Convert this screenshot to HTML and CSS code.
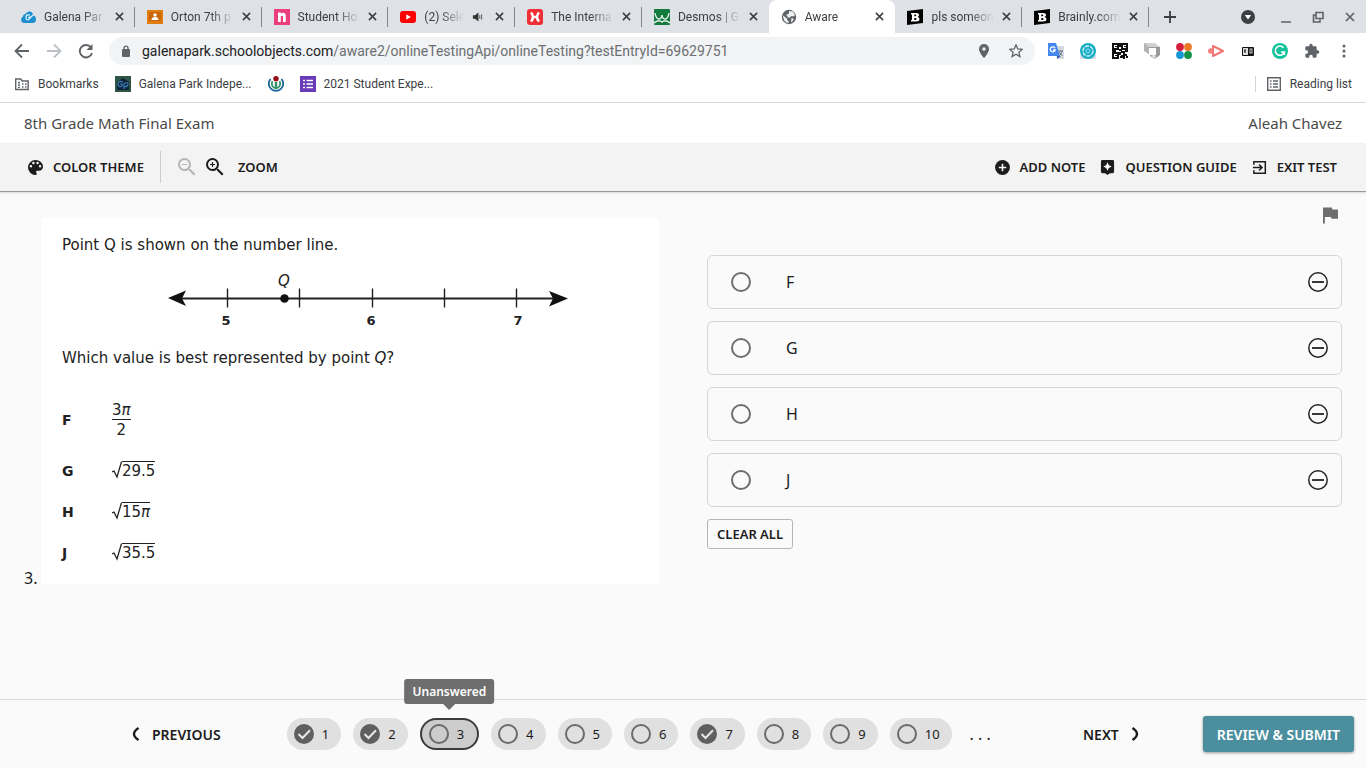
FILE: index.html
```html
<!DOCTYPE html>
<html lang="en">
<head>
<meta charset="utf-8">
<meta name="viewport" content="width=device-width, initial-scale=1">
<title>Aware</title>
<link rel="stylesheet" href="styles.css">
</head>
<body>
<svg class="defs" aria-hidden="true">
  <symbol id="x" viewBox="0 0 10 10"><path d="M1 1l8 8M9 1L1 9" stroke="currentColor" stroke-width="1.700"/></symbol>
  <symbol id="brainly" viewBox="0 0 16 16"><path d="M0 2L16 0V14L0 16Z" fill="#000"/><path d="M4 4h5q3 0 3 2 0 1.500-1.500 2 2 .3 2 2 0 2.500-3.500 2.500H4v-1.500h1v-5.500H4zM7.300 5.600v1.700h1q1 0 1-.8t-1-.9zM7.300 8.900V11h1.200q1 0 1-1t-1-1.100z" fill="#fff" fill-rule="evenodd"/></symbol>
  <symbol id="check" viewBox="0 0 20 20"><circle cx="10" cy="10" r="10" fill="#5f5f5f"/><path d="M4.500 10l4 4 7.500-7.800" fill="none" stroke="#e8e8e8" stroke-width="2"/></symbol>
  <symbol id="ring" viewBox="0 0 20 20"><circle cx="10" cy="10" r="9" fill="none" stroke="#6a6a6a" stroke-width="2"/></symbol>
  <symbol id="minus" viewBox="0 0 20 20"><circle cx="10" cy="10" r="9.200" fill="none" stroke="#222" stroke-width="1.500"/><path d="M4 10h12" stroke="#222" stroke-width="1.800"/></symbol>
  <symbol id="zoomout" viewBox="3 3 18 18"><path fill="currentColor" d="M15.500 14h-.79l-.28-.27A6.471 6.471 0 0 0 16 9.500 6.500 6.500 0 1 0 9.500 16c1.610 0 3.090-.59 4.230-1.570l.27.28v.79l5 4.990L20.490 19l-4.990-5zm-6 0C7.010 14 5 11.990 5 9.500S7.010 5 9.500 5 14 7.010 14 9.500 11.990 14 9.500 14zM7 9h5v1H7z"/></symbol>
</svg>

<header class="browser">
  <div class="strip">
    <div class="tabs">
      <div class="tab"><svg class="fav" viewBox="0 0 16 16"><path d="M3.500 14a3.500 3.500 0 0 1-.5-6.500Q3 5 5.500 5 7 2 10 2.500q3 .8 3.200 4Q16 7 16 10.500 16 14 12.500 14z" fill="#1c8fd0"/><path d="M10 6q-4-1-4 2.500 0 3 3 2 1-1 1-2.500l-2 .5M10 9l3-3" fill="none" stroke="#e4f4fc" stroke-width="1.200"/></svg><span class="name">Galena Par</span><button aria-label="Close tab"><svg><use href="#x"/></svg></button></div>
      <div class="tab"><svg class="fav" viewBox="0 0 16 16"><path d="M0 1h16v14H0z" fill="#e07c10"/><path d="M2 3h12v9H2z" fill="#c86608"/><circle cx="8" cy="6" r="1.700" fill="#fff"/><path d="M4.500 11q0-3 3.500-3t3.500 3z" fill="#fff"/></svg><span class="name">Orton 7th p</span><button aria-label="Close tab"><svg><use href="#x"/></svg></button></div>
      <div class="tab"><svg class="fav" viewBox="0 0 16 16"><path d="M0 0h16v16H0z" fill="#ea3f7b"/><path d="M4 3.500h2.800v1q4.700-2.500 5 2.500v6H9V7.500q-.3-1.500-2.200-.4V13H4z" fill="#fff"/></svg><span class="name">Student Ho</span><button aria-label="Close tab"><svg><use href="#x"/></svg></button></div>
      <div class="tab"><svg class="fav" viewBox="0 0 16 16"><rect y="2" width="16" height="12" rx="3" fill="#f00"/><path d="M6.300 5.300L10.800 8l-4.500 2.700z" fill="#fff"/></svg><span class="name">(2) Sele</span><svg class="sound" viewBox="0 0 12 12"><path d="M1 4h2.300L7 1v10L3.300 8H1z" fill="#333"/><path d="M8.500 4v4M10.500 3v6" stroke="#555" stroke-width="1"/></svg><button aria-label="Close tab"><svg><use href="#x"/></svg></button></div>
      <div class="tab"><svg class="fav" viewBox="0 0 16 16"><rect width="16" height="16" rx="3" fill="#ef2f35"/><path d="M4 3.500q4 4.500 0 9M12 3.500q-4 4.500 0 9M6 8h4" fill="none" stroke="#fff" stroke-width="2.500"/></svg><span class="name">The Interna</span><button aria-label="Close tab"><svg><use href="#x"/></svg></button></div>
      <div class="tab last"><svg class="fav" viewBox="0 0 16 16"><rect width="16" height="16" rx="1" fill="#127a3d"/><path d="M1 4q1 6 4 6 2.500 0 3-4 .5 4 3 4 3 0 4-6M0 14q5-4 8-1 3-3 8 1" fill="none" stroke="#e5f3e9" stroke-width="1.400"/></svg><span class="name">Desmos | G</span><button aria-label="Close tab"><svg><use href="#x"/></svg></button></div>
      <div class="tab active"><svg class="fav" viewBox="0 0 16 16"><circle cx="8" cy="8" r="7.200" fill="#5f6368"/><path d="M2 6.500l4 3v1.500l1.500 1v2.300Q2 13 2 6.500zM8 2l4 .5 2 3.500-1.500 1.500-2-.5L9 8.500H6.500V7L5 6l3-1.500zM10.500 9l2.500 1-2 3h-1z" fill="#eee"/></svg><span class="name">Aware</span><button aria-label="Close tab"><svg><use href="#x"/></svg></button></div>
      <div class="tab"><svg class="fav"><use href="#brainly"/></svg><span class="name">pls someon</span><button aria-label="Close tab"><svg><use href="#x"/></svg></button></div>
      <div class="tab"><svg class="fav"><use href="#brainly"/></svg><span class="name">Brainly.com</span><button aria-label="Close tab"><svg><use href="#x"/></svg></button></div>
    </div>
    <button class="newtab" aria-label="New tab"><svg viewBox="0 0 12 12"><path d="M6 0v12M0 6h12" stroke="#3c4043" stroke-width="1.800"/></svg></button>
    <div class="window-buttons">
      <button aria-label="Search tabs"><svg viewBox="0 0 14 14"><circle cx="7" cy="7" r="7" fill="#3c4043"/><path d="M3.800 5h6.400L7 9.500z" fill="#fff"/></svg></button>
      <button aria-label="Minimize"><svg viewBox="0 0 14 14"><path d="M2 12h10" stroke="#5f6368" stroke-width="1.500"/></svg></button>
      <button aria-label="Restore"><svg viewBox="0 0 14 14"><path d="M5 2.500h7v6H5zM4.500 5H2.500v7H9v-2.500" fill="none" stroke="#5f6368" stroke-width="1.600"/></svg></button>
      <button aria-label="Close window"><svg viewBox="0 0 14 14"><path d="M3 3l8 8M11 3l-8 8" stroke="#5f6368" stroke-width="1.700"/></svg></button>
    </div>
  </div>

  <div class="navbar">
    <div class="nav-buttons">
      <button aria-label="Back"><svg viewBox="0 0 16 16"><path d="M15 8H2M8 1.500L1.500 8 8 14.500" fill="none" stroke="#5f6368" stroke-width="1.800"/></svg></button>
      <button aria-label="Forward"><svg viewBox="0 0 16 16"><path d="M1 8h13M8 1.500L14.500 8 8 14.500" fill="none" stroke="#bdc1c6" stroke-width="1.800"/></svg></button>
      <button aria-label="Reload"><svg viewBox="0 0 16 16"><path d="M13 4.500A6.200 6.200 0 1 0 14 10" fill="none" stroke="#5f6368" stroke-width="1.900"/><path d="M14.500 1v6h-6z" fill="#5f6368"/></svg></button>
    </div>
    <div class="omnibox">
      <svg class="lock" viewBox="0 0 10 12"><rect x="1" y="4" width="8" height="8" rx="1" fill="#5f6368"/><path d="M3 5V3.200a2 2 0 0 1 4 0V5" fill="none" stroke="#5f6368" stroke-width="1.300"/></svg>
      <span class="url"><b>galenapark.schoolobjects.com</b>/aware2/onlineTestingApi/onlineTesting?testEntryId=69629751</span>
      <button aria-label="Location"><svg viewBox="0 0 14 14"><path d="M7 0a5 5 0 0 0-5 5c0 4 5 9 5 9s5-5 5-9a5 5 0 0 0-5-5z" fill="#5f6368"/><circle cx="7" cy="5" r="1.700" fill="#f1f3f4"/></svg></button>
      <button aria-label="Bookmark this page"><svg viewBox="0 0 14 14"><path d="M7 1l1.800 4 4.400.4-3.300 2.900 1 4.300L7 10.300l-3.900 2.300 1-4.300L.8 5.400 5.200 5z" fill="none" stroke="#5f6368" stroke-width="1.300"/></svg></button>
    </div>
    <div class="extensions">
      <button aria-label="Translate"><svg viewBox="0 0 16 16"><path d="M6 3h10v13H9z" fill="#d6dade"/><path d="M0 0h8l4 13H0z" fill="#4687ee"/><path d="M7 5.200A2.500 2.500 0 1 0 7.200 7H5" fill="none" stroke="#fff" stroke-width="1.300"/><path d="M10 8h5M12.500 7v1M14 8q-1 4-3 5M11 9l3.500 4" stroke="#68788b" fill="none"/><path d="M9 13h4l-4 3z" fill="#3158b0"/></svg></button>
      <button aria-label="Extension"><svg viewBox="0 0 16 16"><path d="M0 12h16v4H0z" fill="#d9dfeb"/><circle cx="8" cy="8" r="8" fill="#18abc4"/><circle cx="8" cy="8" r="5" fill="none" stroke="#d4f6fb" stroke-width="1.400" stroke-dasharray="4 1"/><circle cx="8" cy="8" r="2" fill="none" stroke="#8fe3ef"/></svg></button>
      <button aria-label="QR code"><svg viewBox="0 0 16 16" fill="none" stroke="#111" stroke-width="1.400" shape-rendering="crispEdges"><path d="M1 1h5v5H1zM10 1h5v5h-5zM1 10h5v5H1z"/><path d="M3 3.500h1.500M12 3.500h1.500M3 12.500h1.500M8 0v4M7 7h3M0 8h4M8 9v3M9 9h3v3h3M13 8h3M8 14h3M12 11v5M14 14h2M10 12v2"/></svg></button>
      <button aria-label="Extension"><svg viewBox="0 0 16 16"><path d="M0 0h11v12H6l-6-4z" fill="#b4b4b4"/><path d="M0 0h11l5 4H5z" fill="#d1d1d1"/><path d="M5 4h11v8l-5 4-5-3z" fill="#999"/><path d="M5 5h7v7H5z" fill="#fff"/><path d="M11 11l1 5-5-3z" fill="#e2e2e2"/></svg></button>
      <button aria-label="Extension"><svg viewBox="0 0 16 16"><circle cx="4" cy="4" r="3.900" fill="#d41f3c"/><circle cx="12" cy="4" r="3.900" fill="#ea7a25"/><circle cx="4" cy="12" r="3.900" fill="#1597d4"/><circle cx="12" cy="12" r="3.900" fill="#109447"/></svg></button>
      <button aria-label="Screen recorder"><svg viewBox="0 0 16 16"><path d="M5 3l10 5-10 5z" fill="none" stroke="#ef7370" stroke-width="2" stroke-linejoin="round"/><circle cx="2.800" cy="8" r="2.800" fill="#f6807d"/></svg></button>
      <button aria-label="Extension"><svg viewBox="0 0 16 16"><rect x="2" y="4" width="12" height="9" rx="1" fill="#111"/><path d="M3 5h5v7H3z" fill="#ddd"/><path d="M4 8h2M5 6v4" stroke="#222"/><rect x="10" y="6" width="2" height="4" fill="none" stroke="#ccc"/></svg></button>
      <button aria-label="Grammarly"><svg viewBox="0 0 16 16"><circle cx="8" cy="8" r="8" fill="#15c39a"/><path d="M11.500 4.800A4.600 4.600 0 1 0 12.300 9H9M12.300 9v3" fill="none" stroke="#fff" stroke-width="1.600"/></svg></button>
      <button aria-label="Extensions"><svg viewBox="0 0 24 24"><path fill="#5f6368" d="M20.500 11H19V7c0-1.100-.9-2-2-2h-4V3.500a2.500 2.500 0 0 0-5 0V5H4c-1.100 0-2 .9-2 2v3.800h1.500a2.700 2.700 0 0 1 0 5.400H2V20c0 1.100.9 2 2 2h3.800v-1.500a2.700 2.700 0 0 1 5.400 0V22H17c1.100 0 2-.9 2-2v-4h1.500a2.500 2.500 0 0 0 0-5z"/></svg></button>
      <button aria-label="Menu"><svg viewBox="0 0 16 16" fill="#5f6368"><circle cx="8" cy="3" r="1.500"/><circle cx="8" cy="8" r="1.500"/><circle cx="8" cy="13" r="1.500"/></svg></button>
    </div>
  </div>

  <nav class="bookmarks" aria-label="Bookmarks">
    <a href="#"><svg viewBox="0 0 16 16"><path d="M1.700 3h5l1.500 2h6v8.500H1.700z" fill="none" stroke="#5f6368" stroke-width="1.400"/><path d="M4 6.500h2M4 9h2M4 11.300h2M8 8h1.500M11 8h1.500M8 11h1.500M11 11h1.500" stroke="#5f6368" stroke-width="1.300"/></svg>Bookmarks</a>
    <a href="#"><svg viewBox="0 0 16 16"><path d="M0 0h16v16H0z" fill="#2d5644"/><path d="M8 2l6 4v8H2V6z" fill="#10243a"/><path d="M8 6Q3 4 3 8.500 4 12 7 10V8H5M9 13V8q4-3 4 0 0 3-4 2.500" fill="none" stroke="#397fb8" stroke-width="1.200"/></svg>Galena Park Indepe...</a>
    <a href="#" aria-label="Bookmark"><svg viewBox="0 0 16 16"><path d="M2.500 3a7.200 7.200 0 1 0 11 0" fill="none" stroke="#21669a" stroke-width="1.800"/><path d="M4.300 5q-2 5.500 3.700 7.500 5.700-2 3.700-7.500" fill="none" stroke="#33936a" stroke-width="1.700"/><path d="M8 6v6" stroke="#33936a" stroke-width="2.500"/><circle cx="8" cy="2.700" r="2.700" fill="#980e16"/></svg></a>
    <a href="#"><svg viewBox="0 0 16 16"><path d="M0 0h16v16H0z" fill="#673ab7"/><path d="M3 4.500h2M3 8h2M3 11.500h2M6.500 4.500H13M6.500 8H13M6.500 11.500H13" stroke="#fff" stroke-width="1.700"/></svg>2021 Student Expe...</a>
    <a class="reading" href="#"><svg viewBox="0 0 16 16"><path d="M1.700 1.700h12.600v12.600H1.700z" fill="none" stroke="#5f6368" stroke-width="1.400"/><path d="M4 5h1.500M4 8h1.500M4 11h1.500M7 5h5M7 8h5M7 11h5" stroke="#5f6368" stroke-width="1.400"/></svg>Reading list</a>
  </nav>
</header>

<div class="titlebar"><h1>8th Grade Math Final Exam</h1><span>Aleah Chavez</span></div>

<div class="toolbar">
  <button><svg viewBox="3 3 18 18"><path fill="#1c1c1c" d="M12 3a9 9 0 0 0 0 18c.83 0 1.500-.67 1.500-1.500 0-.39-.15-.74-.39-1.010-.23-.26-.38-.61-.38-.99 0-.83.67-1.500 1.500-1.500H16c2.760 0 5-2.240 5-5 0-4.420-4.030-8-9-8zm-5.500 9a1.500 1.500 0 1 1 0-3 1.500 1.500 0 0 1 0 3zm3-4a1.500 1.500 0 1 1 0-3 1.500 1.500 0 0 1 0 3zm5 0a1.500 1.500 0 1 1 0-3 1.500 1.500 0 0 1 0 3zm3 4a1.500 1.500 0 1 1 0-3 1.500 1.500 0 0 1 0 3z"/></svg>COLOR THEME</button>
  <div class="zoom">
    <button class="big dim" aria-label="Zoom out" disabled><svg><use href="#zoomout"/></svg></button>
    <button class="big" aria-label="Zoom in"><svg viewBox="3 3 18 18"><use href="#zoomout" x="3" y="3" width="18" height="18"/><path d="M9.500 7v5" stroke="currentColor" stroke-width="1.200"/></svg></button>
    <span>ZOOM</span>
  </div>
  <div class="actions">
    <button><svg viewBox="0 0 16 16"><circle cx="8" cy="8" r="7.900" fill="#1c1c1c"/><path d="M8 4v8M4 8h8" stroke="#f3f3f3" stroke-width="1.700"/></svg>ADD NOTE</button>
    <button><svg viewBox="0 0 16 16"><path d="M2.500 0h11q1.500 0 1.500 1.500v11q0 1.500-1.500 1.500H10.500L8 16l-2.500-2H2.500Q1 14 1 12.500v-11Q1 0 2.500 0z" fill="#1c1c1c"/><path d="M8 2.500L9.400 5.600 12.500 7 9.400 8.400 8 11.500 6.600 8.400 3.500 7 6.600 5.600z" fill="#fff"/></svg>QUESTION GUIDE</button>
    <button><svg viewBox="0 0 16 16" fill="none" stroke="#1c1c1c" stroke-width="1.600"><path d="M2 5V1.800h12.200v12.400H2V11M1 8h9M7.500 4.800L10.700 8l-3.200 3.200"/></svg>EXIT TEST</button>
  </div>
</div>

<main class="question">
  <section class="prompt">
    <span class="number">3.</span>
    <div class="sheet">
      <p>Point Q is shown on the number line.</p>
      <svg class="line" viewBox="0 0 400 56" role="img" aria-label="Number line from 5 to 7 with point Q">
        <path d="M12 24.500H388" stroke="#222" stroke-width="1.800"/>
        <path d="M0 24L18 16.500 14 24.500 18 32zM400 24.500L381 17l4 7.500-4 8z" fill="#111"/>
        <path d="M59.500 14.500v19M131.500 14.500v19M204.500 14.500v19M276.500 14.500v19M348.500 14.500v19" stroke="#222" stroke-width="1.400"/>
        <circle cx="116.500" cy="24.500" r="4.300" fill="#111"/>
        <text class="q" x="116" y="12">Q</text>
        <text x="58" y="51">5</text><text x="203" y="51">6</text><text x="350" y="51">7</text>
      </svg>
      <p>Which value is best represented by point <i>Q</i>?</p>
      <dl class="values">
        <dt>F</dt><dd><span class="frac"><span>3<i>π</i></span><span>2</span></span></dd>
        <dt>G</dt><dd class="root"><svg viewBox="0 0 10 18"><path d="M0 11l2-1 3 6L9.500 .7" fill="none" stroke="#222" stroke-width="1.300"/></svg><span>29.5</span></dd>
        <dt>H</dt><dd class="root"><svg viewBox="0 0 10 18"><path d="M0 11l2-1 3 6L9.500 .7" fill="none" stroke="#222" stroke-width="1.300"/></svg><span>15<i>π</i></span></dd>
        <dt>J</dt><dd class="root"><svg viewBox="0 0 10 18"><path d="M0 11l2-1 3 6L9.500 .7" fill="none" stroke="#222" stroke-width="1.300"/></svg><span>35.5</span></dd>
      </dl>
    </div>
  </section>

  <section class="answers">
    <button class="flag" aria-label="Flag question"><svg viewBox="0 0 16 17"><path d="M0 0h9.500l.5 2H16v10H9l-.5-2H2v7H0z" fill="#6e6e6e"/></svg></button>
    <div class="option"><label><input type="radio" name="answer">F</label><button aria-label="Eliminate F"><svg><use href="#minus"/></svg></button></div>
    <div class="option"><label><input type="radio" name="answer">G</label><button aria-label="Eliminate G"><svg><use href="#minus"/></svg></button></div>
    <div class="option"><label><input type="radio" name="answer">H</label><button aria-label="Eliminate H"><svg><use href="#minus"/></svg></button></div>
    <div class="option"><label><input type="radio" name="answer">J</label><button aria-label="Eliminate J"><svg><use href="#minus"/></svg></button></div>
    <button class="clear">CLEAR ALL</button>
  </section>
</main>

<footer class="footer">
  <div class="pager">
    <button class="step"><svg viewBox="0 0 8 14"><path d="M6.500 1Q2 4 2 7t4.500 6" fill="none" stroke="#1c1c1c" stroke-width="2.400"/></svg>PREVIOUS</button>
    <div class="pills">
      <button class="pill"><svg><use href="#check"/></svg>1</button>
      <button class="pill"><svg><use href="#check"/></svg>2</button>
      <button class="pill current"><svg><use href="#ring"/></svg>3<span class="tip" role="tooltip">Unanswered</span></button>
      <button class="pill"><svg><use href="#ring"/></svg>4</button>
      <button class="pill"><svg><use href="#ring"/></svg>5</button>
      <button class="pill"><svg><use href="#ring"/></svg>6</button>
      <button class="pill"><svg><use href="#check"/></svg>7</button>
      <button class="pill"><svg><use href="#ring"/></svg>8</button>
      <button class="pill"><svg><use href="#ring"/></svg>9</button>
      <button class="pill"><svg><use href="#ring"/></svg>10</button>
      <span class="dots">. . .</span>
    </div>
    <button class="step next">NEXT<svg viewBox="0 0 8 14"><path d="M1.500 1Q6 4 6 7t-4.500 6" fill="none" stroke="#1c1c1c" stroke-width="2.400"/></svg></button>
  </div>
  <button class="submit">REVIEW &amp; SUBMIT</button>
</footer>
</body>
</html>
```
FILE: styles.css
```css
* { box-sizing: border-box; }
body {
  margin: 0;
  min-height: 100vh;
  display: flex;
  flex-direction: column;
  background: #fafafa;
  color: #1c1c1c;
  font-family: "Noto Sans", "Open Sans", sans-serif;
  font-size: 16px;
}
button { border: 0; padding: 0; background: none; font: inherit; color: inherit; display: flex; align-items: center; }
svg { display: block; flex: none; }
h1, p, dl, dd { margin: 0; }
.defs { position: absolute; width: 0; height: 0; }

/* browser chrome */
.browser { background: #fff; border-bottom: 1px solid #d5d7d9; font-family: Roboto, sans-serif; font-size: 12px; color: #3c4043; }
.strip { display: flex; align-items: center; height: 33px; padding-left: 8px; background: #dee1e6; }
.tabs { display: flex; flex: 0 1 1141px; min-width: 0; align-self: stretch; }
.tab { flex: 1 1 0; min-width: 0; display: flex; align-items: center; padding: 0 11px 0 12px; background: linear-gradient(#80868b, #80868b) right center / 1px 20px no-repeat; }
.tab.last { background: none; }
.tab.active { background: #fff; border-radius: 8px 8px 0 0; }
.fav { width: 16px; height: 16px; margin-right: 8px; }
.name { flex: 1; min-width: 0; overflow: hidden; white-space: nowrap; mask-image: linear-gradient(to right, #000 calc(100% - 24px), transparent); }
.tab button { margin-left: 8px; }
.tab button svg { width: 9px; height: 9px; }
.sound { width: 11px; height: 12px; margin: 0 4px 0 8px; }
.newtab { margin-left: 15px; }
.newtab svg { width: 12px; height: 12px; }
.window-buttons { display: flex; gap: 18px; margin-left: auto; padding-right: 9px; }
.window-buttons button:first-child { margin-right: 6px; }
.window-buttons svg { width: 14px; height: 14px; }

.navbar { display: flex; align-items: center; height: 36px; padding: 0 14px; }
.nav-buttons { display: flex; gap: 16px; }
.nav-buttons svg { width: 16px; height: 16px; }
.omnibox { flex: 1; min-width: 0; display: flex; align-items: center; height: 28px; margin-left: 15px; padding: 0 12px; border-radius: 14px; background: #f1f3f4; }
.lock { width: 10px; height: 12px; margin-right: 11px; }
.url { flex: 1; min-width: 0; overflow: hidden; white-space: nowrap; font-size: 14px; color: #6b6f73; }
.url b { font-weight: 400; color: #202124; }
.omnibox button { margin-left: 18px; }
.omnibox button svg { width: 14px; height: 14px; }
.extensions { display: flex; gap: 16px; margin-left: 13px; }
.extensions svg { width: 16px; height: 16px; }

.bookmarks { display: flex; align-items: center; gap: 16px; height: 33px; padding: 0 14px; padding-bottom: 3px; }
.bookmarks a { display: flex; align-items: center; gap: 8px; color: inherit; text-decoration: none; }
.bookmarks svg { width: 16px; height: 16px; }
.bookmarks .reading { margin-left: auto; padding-left: 10px; border-left: 1px solid #d0d2d5; }

/* exam header */
.titlebar { display: flex; justify-content: space-between; align-items: center; height: 40px; padding: 0 24px; background: #fff; color: #4a4a4a; font-size: 15px; }
.titlebar h1 { font-size: inherit; font-weight: 400; }
.toolbar { display: flex; align-items: center; height: 49px; padding: 0 29px 0 28px; background: #f3f3f3; border-bottom: 1px solid #999; box-shadow: 0 1px 2px #0002; font-size: 13px; font-weight: 600; }
.toolbar button { gap: 10px; }
.toolbar svg { width: 15px; height: 15px; }
.toolbar .zoom { display: flex; align-items: center; gap: 10px; height: 32px; margin-left: 16px; padding-left: 17px; border-left: 1px solid #ccc; }
.zoom .big svg { width: 18px; height: 18px; }
.zoom .dim { color: #b5b5b5; }
.zoom span { margin-left: 4px; }
.actions { display: flex; gap: 15px; margin-left: auto; }

/* question */
.question { flex: 1; display: grid; grid-template-columns: 1fr 1fr; gap: 48px; align-items: start; padding: 15px 24px; }
.prompt { display: flex; align-items: flex-end; padding-top: 11px; }
.number { width: 17px; line-height: 12px; }
.sheet { flex: 1; min-width: 0; padding: 18px 21px 22px; background: #fff; color: #222; font-family: "DejaVu Sans", sans-serif; font-size: 15px; line-height: 18px; }
.line { width: 400px; height: 56px; margin: 20px 0 19px 106px; }
.line text { text-anchor: middle; font-size: 13px; font-weight: 700; fill: #222; }
.line .q { font-style: italic; font-weight: 400; font-size: 15px; }
.values { display: grid; grid-template-columns: 50px 1fr; row-gap: 22px; align-items: center; margin-top: 34px; }
.values dt { font-weight: 700; font-size: 14px; }
.frac { display: inline-flex; flex-direction: column; text-align: center; line-height: 17px; }
.frac span + span { border-top: 1px solid #222; padding-top: 2px; }
.root { display: flex; }
.root svg { width: 10px; height: 18px; }
.root span { border-top: 1px solid #222; }

.answers { display: flex; flex-direction: column; gap: 12px; }
.flag { align-self: flex-end; margin: 0 4px 19px 0; }
.flag svg { width: 15px; height: 17px; }
.option { display: flex; align-items: center; height: 54px; padding-right: 13px; border: 1px solid #d6d6d6; border-radius: 6px; }
.option label { flex: 1; display: flex; align-items: center; gap: 35px; padding-left: 23px; }
.option input { appearance: none; width: 20px; height: 20px; margin: 0; border: 2px solid #6e6e6e; border-radius: 50%; }
.option svg { width: 20px; height: 20px; }
.clear { align-self: flex-start; height: 30px; padding: 0 9px; border: 1px solid #b5b5b5; border-radius: 3px; font-size: 13px; font-weight: 600; }

/* footer */
.footer { display: flex; align-items: center; height: 69px; padding-right: 12px; border-top: 1px solid #d5d9d7; }
.pager { flex: 1; display: flex; align-items: center; justify-content: space-between; padding: 0 64px 0 132px; }
.step { gap: 12px; font-size: 14px; font-weight: 600; }
.step svg { width: 8px; height: 14px; }
.pills { display: flex; align-items: center; gap: 12px; margin-right: 26px; }
.pill { position: relative; gap: 8px; height: 32px; padding: 0 12px 0 7px; border-radius: 16px; background: #e0e0e0; font-size: 13px; }
.pill svg { width: 20px; height: 20px; }
.current { padding: 0 13px 0 7px; border: 2px solid #3c3c3c; background: #ccc; }
.tip { position: absolute; left: 50%; bottom: 44px; transform: translateX(-50%); padding: 0 8px; border-radius: 3px; background: #6e6e6e; color: #fff; font-size: 12px; font-weight: 600; line-height: 25px; }
.tip::after { content: ""; position: absolute; left: 50%; top: 100%; margin-left: -6px; border: 6px solid transparent; border-top-color: #6e6e6e; border-bottom: 0; }
.dots { margin-left: 6px; }
.submit { height: 36px; padding: 0 14px; border-radius: 3px; background: #4b8f9f; color: #fff; font-size: 14px; font-weight: 600; box-shadow: 0 1px 3px #0006; }
```
